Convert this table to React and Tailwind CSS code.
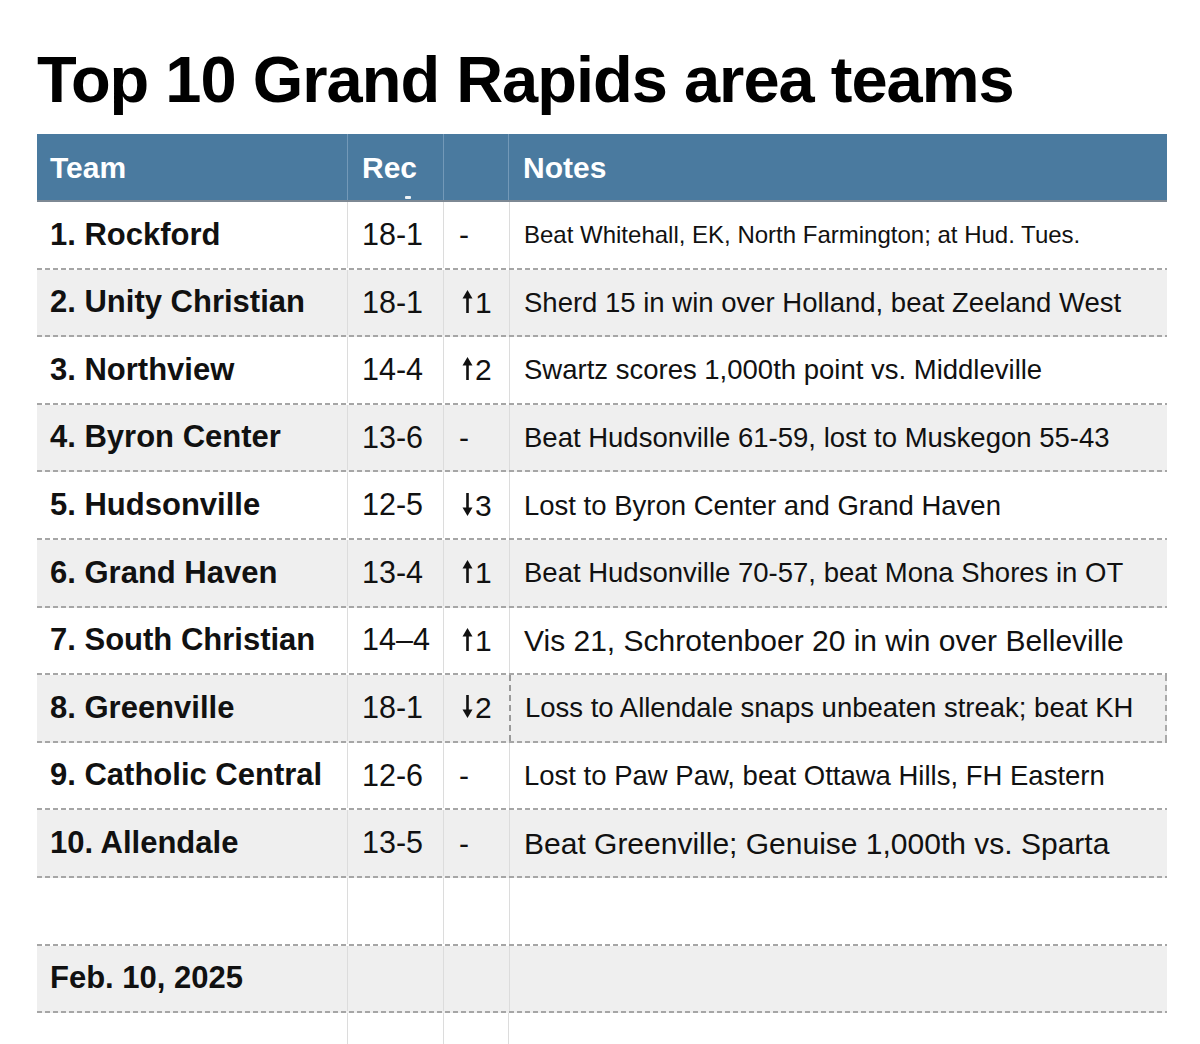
import React from 'react';

const teams = [
  { name: '1. Rockford', rec: '18-1', move: '-', note: 'Beat Whitehall, EK, North Farmington; at Hud. Tues.', size: 'text-[24px]' },
  { name: '2. Unity Christian', rec: '18-1', move: 'up1', note: 'Sherd 15 in win over Holland, beat Zeeland West', size: 'text-[27.5px]' },
  { name: '3. Northview', rec: '14-4', move: 'up2', note: 'Swartz scores 1,000th point vs. Middleville', size: 'text-[27.5px]' },
  { name: '4. Byron Center', rec: '13-6', move: '-', note: 'Beat Hudsonville 61-59, lost to Muskegon 55-43', size: 'text-[27.5px]' },
  { name: '5. Hudsonville', rec: '12-5', move: 'down3', note: 'Lost to Byron Center and Grand Haven', size: 'text-[27.5px]' },
  { name: '6. Grand Haven', rec: '13-4', move: 'up1', note: 'Beat Hudsonville 70-57, beat Mona Shores in OT', size: 'text-[27.5px]' },
  { name: '7. South Christian', rec: '14–4', move: 'up1', note: 'Vis 21, Schrotenboer 20 in win over Belleville', size: 'text-[30px]' },
  { name: '8. Greenville', rec: '18-1', move: 'down2', note: 'Loss to Allendale snaps unbeaten streak; beat KH', size: 'text-[27.5px]', selected: true },
  { name: '9. Catholic Central', rec: '12-6', move: '-', note: 'Lost to Paw Paw, beat Ottawa Hills, FH Eastern', size: 'text-[27.5px]' },
  { name: '10. Allendale', rec: '13-5', move: '-', note: 'Beat Greenville; Genuise 1,000th vs. Sparta', size: 'text-[30px]' },
];

const dash = 'h-[2px] w-full bg-[repeating-linear-gradient(90deg,#a6a6a6_0_5px,transparent_5px_8px)]';

// thin arrow with a solid head, same height as the digits
const Arrow = ({ down }) => (
  <svg width="11" height="23" viewBox="0 0 11 23" className={`inline-block align-baseline ml-[3px] mr-[2px] ${down ? 'rotate-180' : ''}`}>
    <polygon points="5.5,0 10.5,8.5 0.5,8.5" fill="#111" />
    <rect x="4.2" y="7.5" width="2.6" height="15.5" fill="#111" />
  </svg>
);

const Move = ({ value }) => {
  if (value.startsWith('up')) return <span><Arrow />{value.slice(2)}</span>;
  if (value.startsWith('down')) return <span><Arrow down />{value.slice(4)}</span>;
  return <span>{value}</span>;
};

const Row = ({ gray, team, rec, move, note, size, selected }) => (
  <div className={gray ? 'bg-[#efefef]' : 'bg-white'}>
    <div className="flex h-[65.6px] text-[#111]">
      <div className="w-[311px] shrink-0 flex items-center pl-[13px] border-r border-[#dcdcdc] text-[31px] font-bold">
        {team}
      </div>
      <div className="w-[96px] shrink-0 flex items-center pl-[14px] border-r border-[#dcdcdc] text-[30.5px]">
        {rec}
      </div>
      <div className="w-[65px] shrink-0 flex items-center pl-[15px] text-[30px]">
        {move && <Move value={move} />}
      </div>
      <div
        className={`flex-1 flex items-center pl-[14px] ${size || ''} ${
          selected
            ? 'border-l-2 border-l-[#9a9a9a] border-r-2 border-r-[#aaaaaa] border-dashed border-y-0'
            : 'border-l border-[#dcdcdc]'
        }`}
      >
        {note}
      </div>
    </div>
    <div className={dash} />
  </div>
);

export default function App() {
  return (
    <div className="w-[1200px] h-[1044px] overflow-hidden bg-white font-['Liberation_Sans',Arial,sans-serif]">
      <div className="pl-[37px] pr-[33px] pt-[47px]">
        <h1 className="text-[65px] leading-[65px] font-bold tracking-[-1px] text-black mb-[22px]">
          Top 10 Grand Rapids area teams
        </h1>

        {/* header */}
        <div className="flex h-[68px] bg-[#4a7a9f] border-b-2 border-[#7d8893] text-white text-[30px] font-bold">
          <div className="w-[311px] shrink-0 flex items-center pl-[13px] border-r border-[#7399b8]">Team</div>
          <div className="relative w-[96px] shrink-0 flex items-center pl-[14px] border-r border-[#7399b8]">
            Rec
            <span className="absolute bottom-[1px] left-[57px] w-[6px] h-[3px] bg-white/90 rounded-[1px]" />
          </div>
          <div className="w-[65px] shrink-0 border-r border-[#7399b8]" />
          <div className="flex-1 flex items-center pl-[14px]">Notes</div>
        </div>

        {teams.map((t, i) => (
          <Row key={t.name} gray={i % 2 === 1} team={t.name} rec={t.rec} move={t.move} note={t.note} size={t.size} selected={t.selected} />
        ))}

        <Row gray={false} team="" rec="" move="" note="" />
        <Row gray team="Feb. 10, 2025" rec="" move="" note="" />

        <div className="flex h-[40px]">
          <div className="w-[311px] shrink-0 border-r border-[#dcdcdc]" />
          <div className="w-[96px] shrink-0 border-r border-[#dcdcdc]" />
          <div className="w-[65px] shrink-0 border-r border-[#dcdcdc]" />
        </div>
      </div>
    </div>
  );
}
